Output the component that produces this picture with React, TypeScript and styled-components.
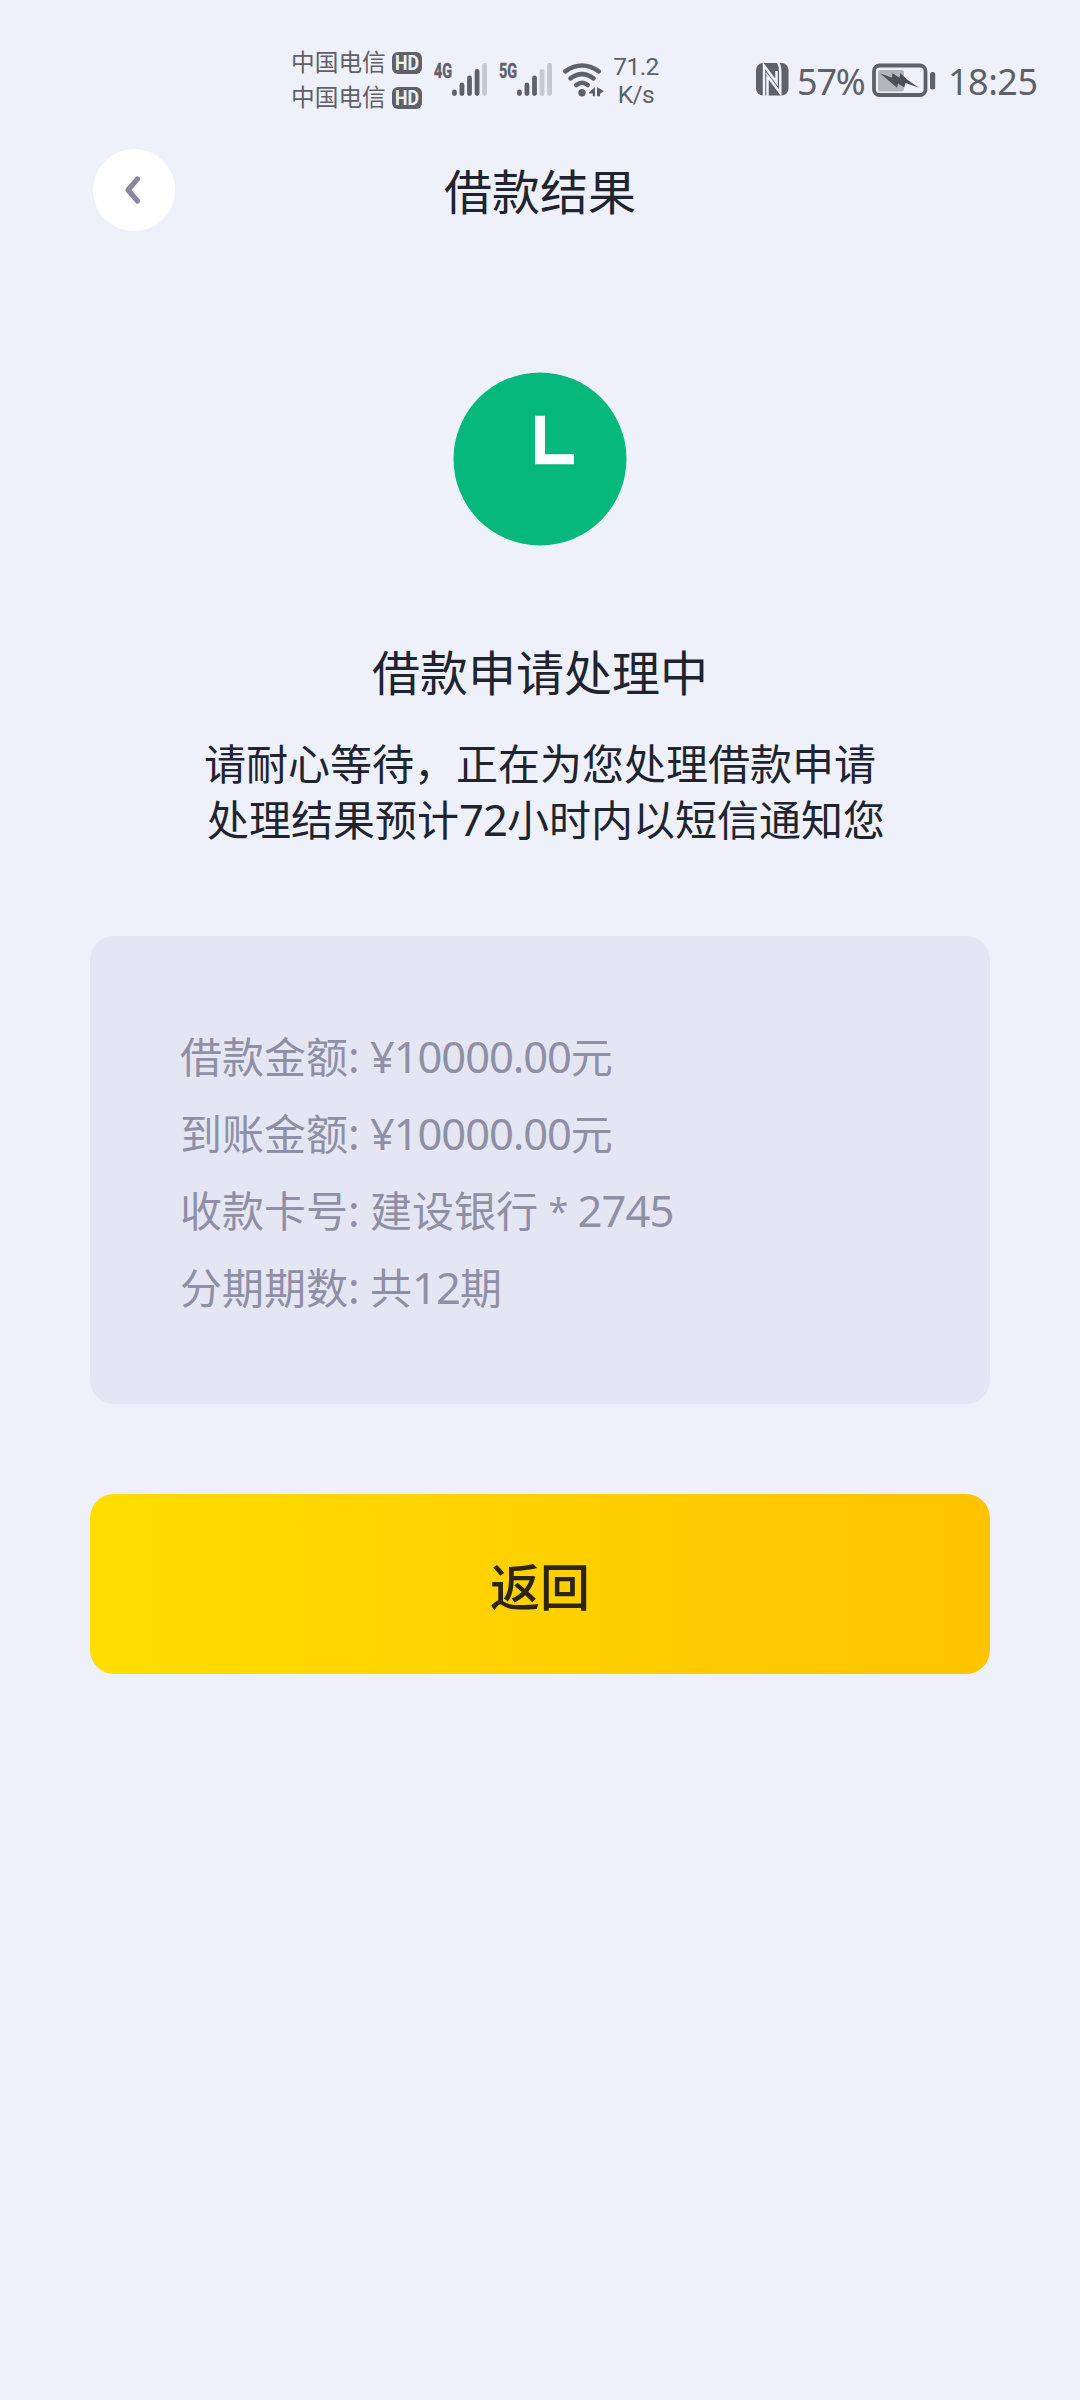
import React from "react";
import styled, { createGlobalStyle } from "styled-components";

const GREY = "#5f6068";
const FADED = "#c6c7d1";

const GlobalStyle = createGlobalStyle`
  * { box-sizing: border-box; }
  body {
    margin: 0;
    background: #eef1f9;
    font-family: "Noto Sans CJK SC", "Noto Sans", sans-serif;
  }
  svg { display: block; flex: none; }
`;

const Screen = styled.div`
  width: 1080px;
  height: 2400px;
  display: flex;
  flex-direction: column;
  background: #eef1f9;
  overflow: hidden;
`;

const StatusBar = styled.div`
  height: 118px;
  flex: none;
  display: flex;
  align-items: flex-start;
  padding: 45px 0 0 291px;
  color: ${GREY};
`;

const Carriers = styled.div`
  width: 143px;
  display: flex;
  flex-direction: column;
`;

const CarrierRow = styled.div`
  height: 35px;
  display: flex;
  align-items: center;
  gap: 6px;
  font-size: 23.7px;
  line-height: 33px;
  white-space: nowrap;
`;

const CarrierName = styled.span`
  height: 35px;
`;

const StatusIcon = styled.svg<{ $gap: number }>`
  margin-right: ${(p) => p.$gap}px;
`;

const Speed = styled.div`
  width: 46px;
  margin-right: 97px;
  padding-top: 8px;
  font-family: Roboto, sans-serif;
  font-size: 24.5px;
  line-height: 28px;
  letter-spacing: -0.6px;
  text-align: center;
  white-space: nowrap;
`;

const StatusText = styled.div<{ $width: number; $gap: number; $track: number }>`
  width: ${(p) => p.$width}px;
  margin-right: ${(p) => p.$gap}px;
  padding-top: 13px;
  font-family: "Noto Sans", sans-serif;
  font-size: 36px;
  line-height: 48px;
  letter-spacing: ${(p) => p.$track}px;
  white-space: nowrap;
`;

const Header = styled.header`
  height: 144px;
  flex: none;
  display: grid;
  grid-template-columns: 82px 1fr 82px;
  align-items: center;
  padding: 0 93px;
`;

const BackButton = styled.button`
  width: 82px;
  height: 82px;
  display: flex;
  align-items: center;
  justify-content: center;
  padding: 0;
  border: 0;
  border-radius: 50%;
  background: #fff;
`;

const Title = styled.h1`
  margin: 0 0 2px;
  text-align: center;
  font-size: 48px;
  font-weight: 400;
  line-height: 64px;
  color: #20242f;
`;

const Result = styled.section`
  flex: none;
  height: 674px;
  padding-top: 110px;
  display: flex;
  flex-direction: column;
  align-items: center;
  color: #20242f;
`;

const Heading = styled.h2`
  margin: 92px 0 0;
  font-size: 48px;
  font-weight: 400;
  line-height: 64px;
`;

const Note = styled.p`
  margin: 32px 0 0;
  font-size: 42px;
  line-height: 55.5px;
  text-align: center;
  white-space: nowrap;
`;

const NoteLine = styled.span<{ $indent?: number }>`
  display: block;
  padding-left: ${(p) => p.$indent ?? 0}px;
`;

const Latin = styled.span<{ $track?: number }>`
  font-family: "Noto Sans", sans-serif;
  font-size: 43.5px;
  line-height: 1;
  letter-spacing: ${(p) => p.$track ?? -0.9}px;
`;

const Mask = styled.span`
  margin-left: 1px;
  font-family: "Noto Sans", sans-serif;
  font-size: 36px;
  line-height: 1;
  vertical-align: 3px;
  white-space: pre;
`;

const Card = styled.section`
  flex: none;
  height: 468px;
  margin: 0 90px;
  padding: 80px 90px;
  border-radius: 24px;
  background: #e4e6f4;
`;

const DetailRow = styled.div`
  height: 77px;
  display: flex;
  align-items: center;
  font-size: 42px;
  line-height: 77px;
  color: #8f90a6;
  white-space: nowrap;
`;

const Label = styled.div`
  width: 190px;
`;

const ReturnButton = styled.button`
  flex: none;
  height: 180px;
  margin: 90px 90px 0;
  padding: 0;
  border: 0;
  border-radius: 24px;
  background: linear-gradient(90deg, #ffde00, #ffc300);
  color: #2c2510;
  font-family: inherit;
  font-size: 50px;
  font-weight: 500;
`;

function HdBadge() {
  return (
    <svg width="30" height="22" viewBox="0 0 30 22">
      <rect width="30" height="22" rx="6" fill={GREY} />
      <text x="3" y="18" textLength="24" lengthAdjust="spacingAndGlyphs" fontFamily="Roboto" fontWeight="700" fontSize="19.5" fill="#eef1f9">HD</text>
    </svg>
  );
}

function Signal({ label, level, gap, offset }: { label: string; level: number; gap: number; offset: number }) {
  const tops = [44.5, 37.6, 30.6, 24, 18];
  return (
    <StatusIcon $gap={gap} width="54" height="60" viewBox="0 0 54 60">
      <text x="0" y="33" textLength="18" lengthAdjust="spacingAndGlyphs" fontFamily="Roboto" fontWeight="700" fontSize="20.5" fill={GREY} stroke={GREY} strokeWidth="0.5">{label}</text>
      {tops.map((top, i) => (
        <rect key={top} x={offset + i * 7.55} y={top} width="4.8" height={51 - top} rx="2.4" fill={i < level ? GREY : FADED} />
      ))}
    </StatusIcon>
  );
}

function Wifi() {
  return (
    <StatusIcon $gap={9} width="42" height="60" viewBox="0 0 42 60">
      <g fill="none" stroke={GREY} strokeWidth="4.6" strokeLinecap="round">
        <path d="M3.2 26.3Q20 14.7 36.8 26.3" />
        <path d="M8.5 33.3Q20 24.8 31.5 33.3" />
        <path d="M14.3 40Q20 35.5 25.7 40" />
      </g>
      <circle cx="20" cy="47.7" r="3.7" fill={GREY} />
      <path d="M27 47.5L33 42V51.2H30.8V48.5H27ZM35 42L41.8 46L38 49V51.2H35Z" fill={GREY} />
    </StatusIcon>
  );
}

function Nfc() {
  return (
    <StatusIcon $gap={8} width="33" height="60" viewBox="0 0 33 60">
      <rect x="0" y="18" width="32.5" height="32.5" rx="7" fill={GREY} />
      <g fill="none" stroke="#eef1f9" strokeWidth="2.5">
        <path d="M8 51V20.5L20.5 37.5V26" />
        <path d="M11.5 51V31L24.3 48V27Q24.3 21 22 17" />
      </g>
    </StatusIcon>
  );
}

function Battery() {
  return (
    <StatusIcon $gap={12} width="64" height="60" viewBox="0 0 64 60">
      <rect x="2" y="20.5" width="51.5" height="29.5" rx="5.5" fill="none" stroke={GREY} strokeWidth="3.8" />
      <rect x="6" y="25" width="26" height="21.5" rx="2" fill="#b4b5bb" />
      <path d="M8 28.3L20 32.7L20.3 28.3L27.6 32.7L28.3 28L35.7 35L47 42.8L33.5 38L32.3 42.5L26 38.4L25 42.7Z" fill="#4f5057" />
      <rect x="58" y="27" width="5.2" height="17.5" rx="2.2" fill={GREY} />
    </StatusIcon>
  );
}

function Clock() {
  return (
    <svg width="174" height="174" viewBox="0 0 174 174">
      <circle cx="87" cy="87" r="86.5" fill="#07b87d" />
      <path d="M82 43.7H92V82.3H121V92.3H82Z" fill="#fff" />
    </svg>
  );
}

const details = [
  { label: "借款金额", value: <><Latin $track={-1.1}>¥10000.00</Latin>元</> },
  { label: "到账金额", value: <><Latin $track={-1.1}>¥10000.00</Latin>元</> },
  { label: "收款卡号", value: <>建设银行<Mask> * </Mask><Latin>2745</Latin></> },
  { label: "分期期数", value: <>共<Latin>12</Latin>期</> },
];

export default function App() {
  return (
    <>
      <GlobalStyle />
      <Screen>
        <StatusBar>
          <Carriers>
            <CarrierRow><CarrierName>中国电信</CarrierName><HdBadge /></CarrierRow>
            <CarrierRow><CarrierName>中国电信</CarrierName><HdBadge /></CarrierRow>
          </Carriers>
          <Signal label="4G" level={4} gap={11} offset={18} />
          <Signal label="5G" level={3} gap={9} offset={18} />
          <Wifi />
          <Speed>71.2<br />K/s</Speed>
          <Nfc />
          <StatusText $width={69} $gap={6} $track={-1.2}>57%</StatusText>
          <Battery />
          <StatusText $width={90} $gap={0} $track={-0.5}>18:25</StatusText>
        </StatusBar>
        <Header>
          <BackButton aria-label="返回">
            <svg width="24" height="36" viewBox="0 0 24 36">
              <path d="M15.5 7L6 18L15.5 29" fill="none" stroke="#88879e" strokeWidth="5.2" strokeLinecap="round" strokeLinejoin="round" />
            </svg>
          </BackButton>
          <Title>借款结果</Title>
        </Header>
        <Result>
          <Clock />
          <Heading>借款申请处理中</Heading>
          <Note>
            <NoteLine>请耐心等待，正在为您处理借款申请</NoteLine>
            <NoteLine $indent={12}>处理结果预计<Latin>72</Latin>小时内以短信通知您</NoteLine>
          </Note>
        </Result>
        <Card>
          {details.map((item) => (
            <DetailRow key={item.label}>
              <Label>{item.label}<Latin>:</Latin></Label>
              <div>{item.value}</div>
            </DetailRow>
          ))}
        </Card>
        <ReturnButton>返回</ReturnButton>
      </Screen>
    </>
  );
}
